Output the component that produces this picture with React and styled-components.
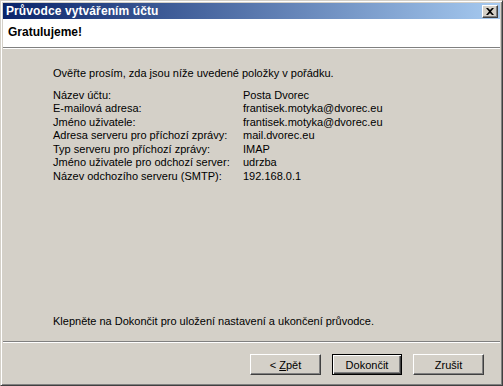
import React from "react";
import styled, { createGlobalStyle } from "styled-components";

const Global = createGlobalStyle`
  html, body {
    margin: 0;
    padding: 0;
    background: #d4d0c8;
  }
  body {
    font-family: "Liberation Sans", Arial, sans-serif;
    font-size: 11px;
    color: #000;
  }
`;

const Window = styled.div`
  box-sizing: border-box;
  width: 503px;
  height: 386px;
  display: flex;
  flex-direction: column;
  background: #d4d0c8;
  border: 1px solid;
  border-color: #d4d0c8 #404040 #404040 #d4d0c8;
  box-shadow: inset 1px 1px 0 #ffffff, inset -1px -1px 0 #808080;
  padding: 2px;
`;

const TitleBar = styled.div`
  height: 16px;
  flex: none;
  display: flex;
  align-items: center;
  justify-content: space-between;
  padding: 0 2px 0 3px;
  background: linear-gradient(to right, #0a246a, #a6caf0);
  color: #fff;
  font-weight: bold;
  font-size: 12px;
  letter-spacing: 0.1px;
`;

const CloseButton = styled.div`
  box-sizing: border-box;
  width: 16px;
  height: 13px;
  display: flex;
  align-items: center;
  justify-content: center;
  background: #d4d0c8;
  border: 1px solid;
  border-color: #ffffff #404040 #404040 #ffffff;
  box-shadow: inset -1px -1px 0 #808080;
`;

const Header = styled.div`
  height: 29px;
  flex: none;
  background: #fff;
  padding: 6px 0 0 5px;
  box-sizing: border-box;
  font-weight: bold;
  font-size: 12px;
  border-bottom: 1px solid #808080;
  box-shadow: 0 1px 0 #ffffff;
`;

const Body = styled.div`
  flex: 1;
  display: flex;
  flex-direction: column;
  padding: 18px 0 13px 50px;
  margin-top: 1px;
  line-height: 13.5px;
`;

const Intro = styled.div`
  margin-bottom: 8px;
`;

const Details = styled.div`
  display: grid;
  grid-template-columns: 190px auto;
`;

const Outro = styled.div`
  margin-top: auto;
`;

const Footer = styled.div`
  flex: none;
  height: 42px;
  border-top: 1px solid #808080;
  box-shadow: inset 0 1px 0 #ffffff;
  display: flex;
  justify-content: flex-end;
  align-items: flex-start;
  gap: 11px;
  padding: 12px 16px 0 0;
  box-sizing: border-box;
`;

const Button = styled.button`
  box-sizing: border-box;
  width: ${(p) => p.$w || 71}px;
  height: 21px;
  padding: 0;
  font-family: "Liberation Sans", Arial, sans-serif;
  font-size: 11px;
  color: #000;
  background: #d4d0c8;
  border: 1px solid;
  border-color: ${(p) =>
    p.$default ? "#000" : "#ffffff #404040 #404040 #ffffff"};
  box-shadow: ${(p) =>
    p.$default
      ? "inset 1px 1px 0 #ffffff, inset -1px -1px 0 #404040, inset -2px -2px 0 #808080"
      : "inset -1px -1px 0 #808080"};
`;

const details = [
  ["Název účtu:", "Posta Dvorec"],
  ["E-mailová adresa:", "frantisek.motyka@dvorec.eu"],
  ["Jméno uživatele:", "frantisek.motyka@dvorec.eu"],
  ["Adresa serveru pro příchozí zprávy:", "mail.dvorec.eu"],
  ["Typ serveru pro příchozí zprávy:", "IMAP"],
  ["Jméno uživatele pro odchozí server:", "udrzba"],
  ["Název odchozího serveru (SMTP):", "192.168.0.1"],
];

const App = () => {
  return (
    <>
      <Global />
      <Window>
        <TitleBar>
          <span>Průvodce vytvářením účtu</span>
          <CloseButton>
            <svg width="8" height="7" viewBox="0 0 8 7">
              <path
                d="M0 0h2l2 2 2-2h2L5 3.5 8 7H6L4 5 2 7H0l3-3.5z"
                fill="#000"
              />
            </svg>
          </CloseButton>
        </TitleBar>
        <Header>Gratulujeme!</Header>
        <Body>
          <Intro>Ověřte prosím, zda jsou níže uvedené položky v pořádku.</Intro>
          <Details>
            {details.map(([label, value]) => (
              <React.Fragment key={label}>
                <span>{label}</span>
                <span>{value}</span>
              </React.Fragment>
            ))}
          </Details>
          <Outro>
            Klepněte na Dokončit pro uložení nastavení a ukončení průvodce.
          </Outro>
        </Body>
        <Footer>
          <Button>
            &lt; <u>Z</u>pět
          </Button>
          <Button $default $w={70}>
            Dokončit
          </Button>
          <Button>Zrušit</Button>
        </Footer>
      </Window>
    </>
  );
};

export default App;
